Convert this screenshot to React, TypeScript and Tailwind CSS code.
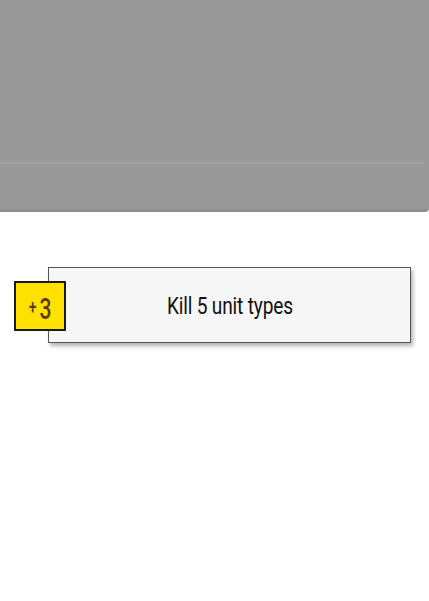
import React from 'react';

export default function App() {
  return (
    <div className="w-[429px] h-[601px] bg-white overflow-hidden" style={{ fontFamily: 'Roboto, "Liberation Sans", sans-serif' }}>
      <div className="h-[212px] bg-[#999999] rounded-br-[4px] border-b-[3px] border-[#8f8f8f] pt-[162px]">
        <div className="h-[2px] w-[424px] bg-[#a1a1a1]" />
      </div>
      <div className="relative mt-[55px] ml-[48px] w-[363px] h-[76px] bg-[#f6f6f6] border border-[#555] shadow-[2px_3px_4px_rgba(0,0,0,0.3)] flex items-center justify-center">
        <span className="text-[23px] text-[#111] inline-block scale-x-[0.83] translate-y-[2px] tracking-[-0.2px]">Kill 5 unit types</span>
        <div className="absolute left-[-35px] top-[13px] w-[52px] h-[50px] bg-[#ffe100] border-2 border-[#1a1a1a] flex items-center justify-center pl-[1px] pt-[6px]">
          <span className="text-[20px] leading-none font-medium text-[#5a3c10] inline-block scale-x-[0.7] mr-[-1px] translate-y-[-2px]">+</span>
          <span className="text-[30px] leading-none font-medium text-[#5a3c10] inline-block scale-x-[0.7]">3</span>
        </div>
      </div>
    </div>
  );
}
